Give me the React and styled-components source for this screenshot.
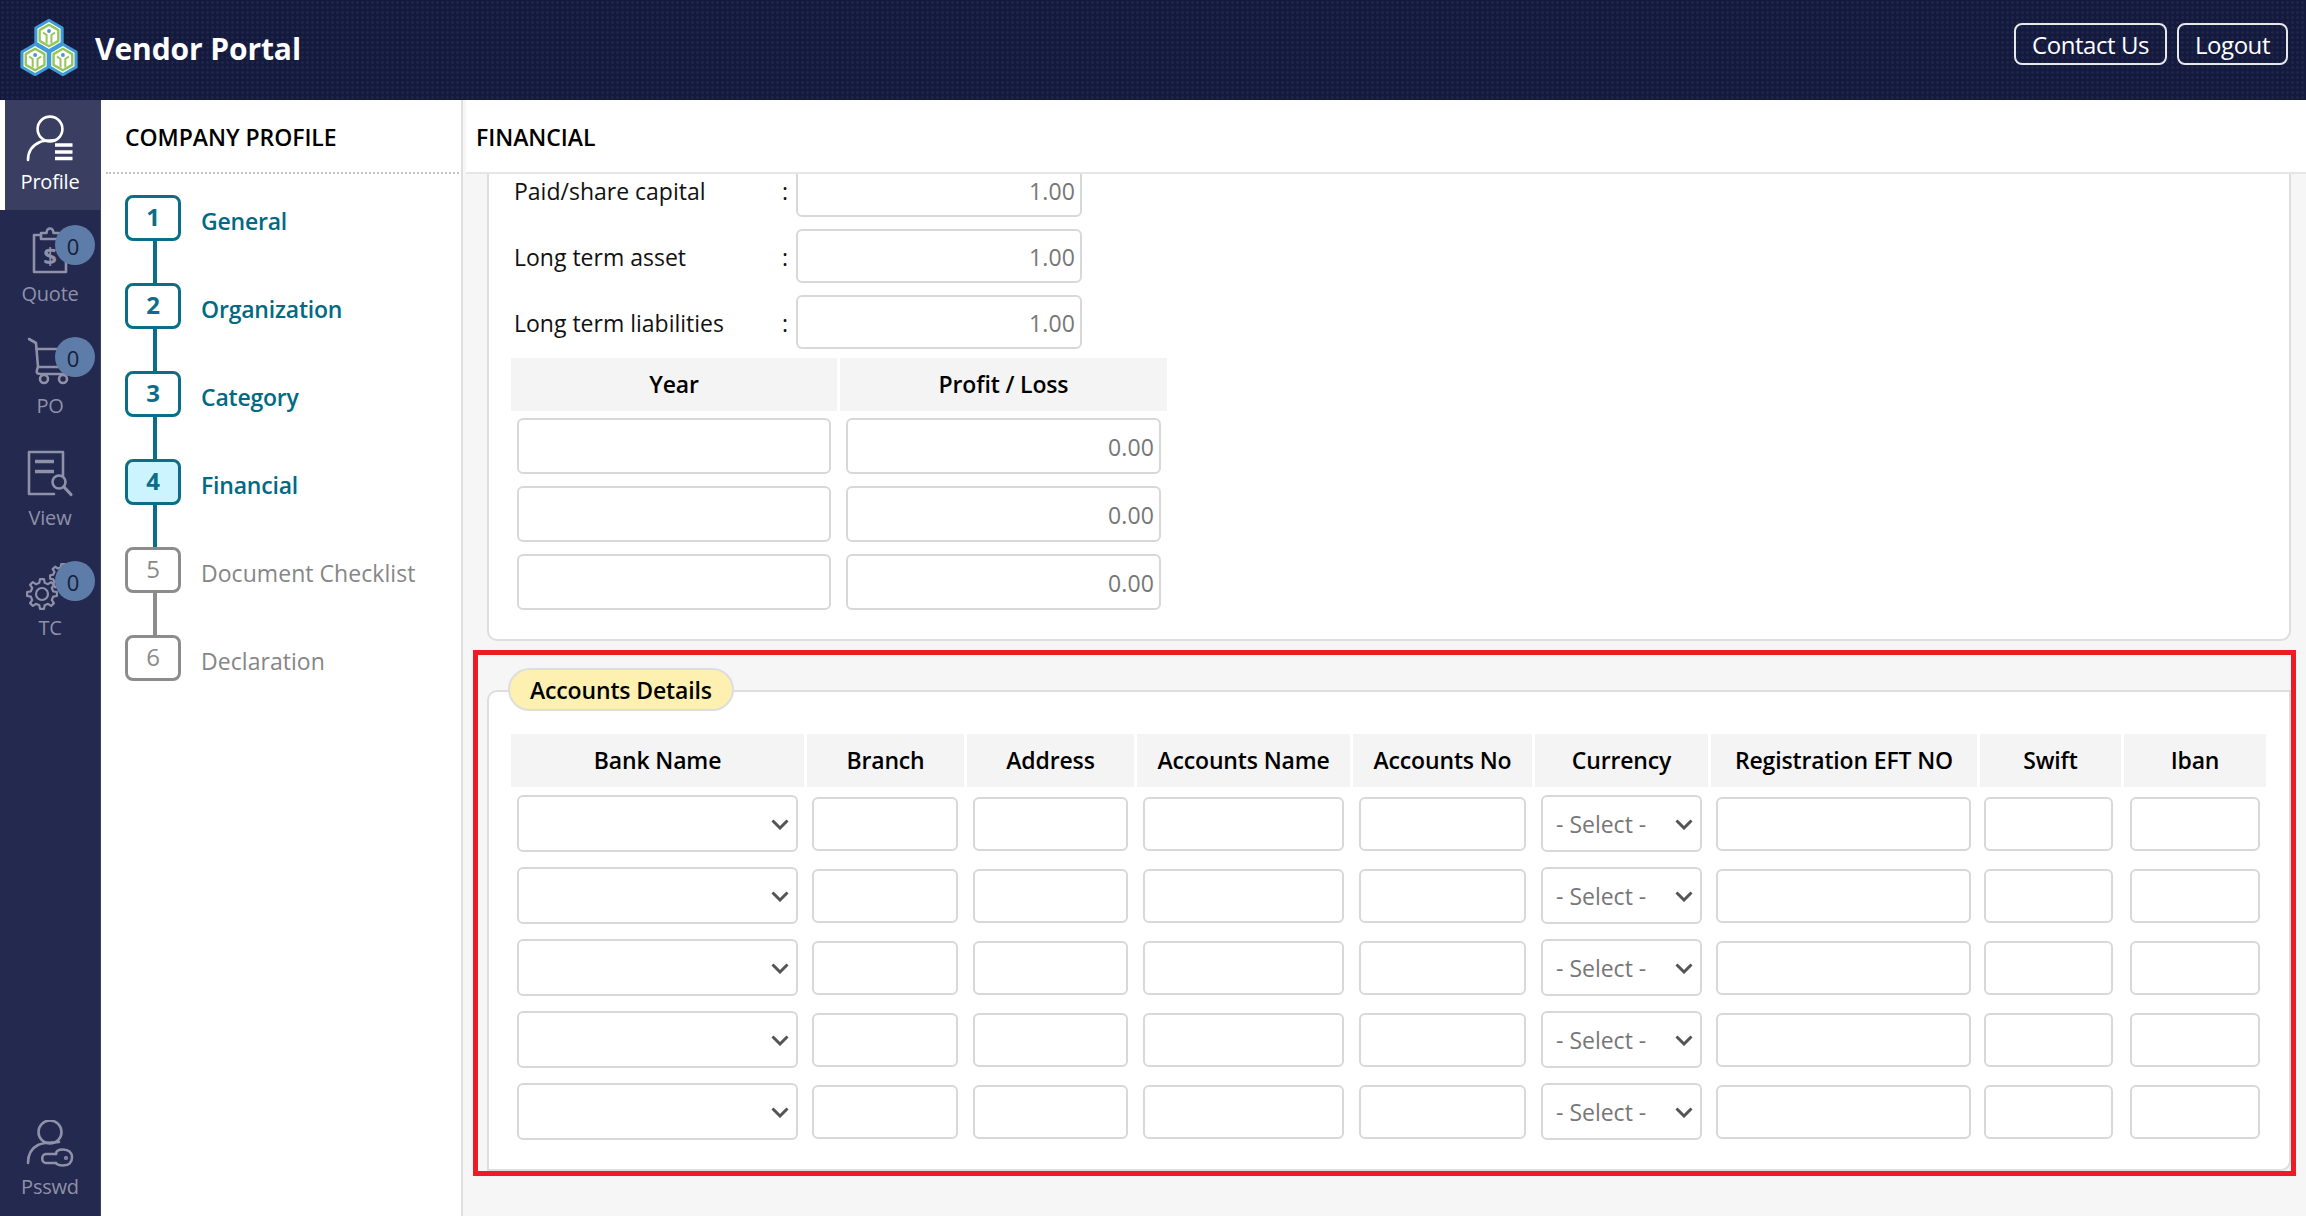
import styled, { createGlobalStyle } from "styled-components";

const GlobalStyle = createGlobalStyle`
  html, body {
    margin: 0;
    height: 100%;
    overflow: hidden;
    background: #fff;
    font-family: "Open Sans", "Noto Sans", sans-serif;
  }
  * { box-sizing: border-box; }
`;

const hexPoints = (cx, cy, r) =>
  [[0, -r], [0.866 * r, -r / 2], [0.866 * r, r / 2], [0, r], [-0.866 * r, r / 2], [-0.866 * r, -r / 2]]
    .map(([x, y]) => `${cx + x},${cy + y}`)
    .join(" ");

// outline of a cog with rounded-ish teeth, used for the TC icon
const gearPath = (cx, cy, outer, inner, teeth) => {
  const step = (Math.PI * 2) / teeth;
  const pts = [];
  for (let i = 0; i < teeth; i++) {
    const a = i * step;
    [[inner, -0.3], [outer, -0.17], [outer, 0.17], [inner, 0.3]].forEach(([r, k]) => {
      pts.push(`${(cx + r * Math.cos(a + k * step)).toFixed(2)} ${(cy + r * Math.sin(a + k * step)).toFixed(2)}`);
    });
  }
  return `M${pts.join("L")}Z`;
};

const LOGO_CELLS = [[28, 16.5], [14.1, 40.5], [41.9, 40.5]];

const Logo = () => (
  <svg width="58" height="58" viewBox="-1 -1 58 58">
    {LOGO_CELLS.map(([x, y]) => (
      <polygon key={`o${x}`} points={hexPoints(x, y, 15.5)} fill="#3f9bd8" stroke="#3f9bd8" strokeWidth="2.5" strokeLinejoin="round" />
    ))}
    {LOGO_CELLS.map(([x, y]) => (
      <polygon key={`w${x}`} points={hexPoints(x, y, 13.4)} fill="#fff" />
    ))}
    {LOGO_CELLS.map(([x, y]) => (
      <g key={`g${x}`} fill="none" stroke="#95c65c" strokeLinejoin="round">
        <polygon points={hexPoints(x, y, 10.8)} fill="#fff" strokeWidth="2.4" />
        <path d={`M${x - 6} ${y - 3}L${x - 2.4} ${y - 0.5}V${y + 8}M${x + 6} ${y - 3}L${x + 2.4} ${y - 0.5}V${y + 8}`} strokeWidth="2" />
        <circle cx={x} cy={y - 4.5} r="1.9" fill="#3f9bd8" stroke="none" />
      </g>
    ))}
  </svg>
);

const IconSvg = styled.svg`
  display: block;
  fill: none;
  stroke: currentColor;
  stroke-width: 2.6;
  stroke-linecap: round;
  stroke-linejoin: round;
`;

const ProfileIcon = () => (
  <IconSvg width="50" height="50" viewBox="0 0 50 50">
    <circle cx="25" cy="16" r="12.4" />
    <path d="M3 47C3 38 8 32 15 29C20 27 26 28 31 27" />
    <path d="M30 32H47.5M30 39H47.5M30 45.5H47.5" strokeWidth="3.6" strokeLinecap="butt" />
  </IconSvg>
);

const QuoteIcon = () => (
  <IconSvg width="50" height="50" viewBox="0 0 50 50">
    <path d="M16 10H9V47H41V10H34" strokeLinecap="butt" />
    <path d="M16 14V8H21.5C22 2 28 2 28.5 8H34V14Z" strokeLinecap="butt" />
    <text x="25" y="40" textAnchor="middle" fontSize="24" fontWeight="700" fill="currentColor" stroke="none" fontFamily="Open Sans">$</text>
  </IconSvg>
);

const CartIcon = () => (
  <IconSvg width="50" height="50" viewBox="0 0 50 50">
    <path d="M4 2L11 6L13 30H42" />
    <path d="M11.5 12H38" />
    <path d="M13 30C10 37 13 37 16 37H44" />
    <circle cx="19" cy="42" r="4" />
    <circle cx="38" cy="42" r="4" />
  </IconSvg>
);

const ViewIcon = () => (
  <IconSvg width="50" height="50" viewBox="0 0 50 50">
    <path d="M29 45H4V3H38V27" />
    <path d="M10 12.5H29M10 22.5H29" strokeWidth="3.4" strokeLinecap="butt" />
    <circle cx="34" cy="33" r="6.5" />
    <path d="M39 38L46 45.5" strokeWidth="3.2" />
  </IconSvg>
);

const GearsIcon = () => (
  <IconSvg width="50" height="50" viewBox="0 0 50 50">
    <path d={gearPath(38, 16, 13, 10, 8)} strokeWidth="2.2" />
    <path d={gearPath(17, 33, 15, 11.5, 8)} fill="#23294f" strokeWidth="2.2" />
    <circle cx="17" cy="33" r="6" strokeWidth="2.2" />
  </IconSvg>
);

const KeyUserIcon = () => (
  <IconSvg width="50" height="50" viewBox="0 0 50 50">
    <circle cx="25" cy="12" r="11.5" />
    <path d="M3 43C3 34 7 28 13 25C19 22 28 23 34 22" />
    <path d="M31 34H21C16 34 16 43 21 43H31" />
    <path d="M31 34C31 31 34 29.5 38 29.5C44 29.5 47 33 47 37.5C47 42 44 45.5 38 45.5C34 45.5 31 44 31 43" />
    <circle cx="41" cy="38" r="0.8" />
  </IconSvg>
);

const Chevron = () => (
  <ChevronMark width="18" height="11" viewBox="0 0 18 11">
    <path d="M1.5 1.5L9 9L16.5 1.5" />
  </ChevronMark>
);

const NAV_ITEMS = [
  { label: "Profile", Icon: ProfileIcon, active: true },
  { label: "Quote", Icon: QuoteIcon, badge: 0 },
  { label: "PO", Icon: CartIcon, badge: 0 },
  { label: "View", Icon: ViewIcon },
  { label: "TC", Icon: GearsIcon, badge: 0, tight: true },
];

const STEPS = [
  { n: 1, label: "General", state: "done" },
  { n: 2, label: "Organization", state: "done" },
  { n: 3, label: "Category", state: "done" },
  { n: 4, label: "Financial", state: "current" },
  { n: 5, label: "Document Checklist", state: "todo" },
  { n: 6, label: "Declaration", state: "todo" },
];

const FIELDS = [
  { label: "Paid/share capital", value: "1.00" },
  { label: "Long term asset", value: "1.00" },
  { label: "Long term liabilities", value: "1.00" },
];

const ACCOUNT_COLUMNS = [
  { title: "Bank Name", width: 293, kind: "bank" },
  { title: "Branch", width: 157, pad: "4px 6px 6px 5px" },
  { title: "Address", width: 167 },
  { title: "Accounts Name", width: 213 },
  { title: "Accounts No", width: 179 },
  { title: "Currency", width: 173, kind: "currency" },
  { title: "Registration EFT NO", width: 266, pad: "4px 6px 6px 5px" },
  { title: "Swift", width: 141, pad: "4px 8px 6px 4px" },
  { title: "Iban", width: 142 },
];

const Dropdown = ({ text }) => (
  <SelectWrap>
    <SelectInput>
      <option>{text}</option>
    </SelectInput>
    <Chevron />
  </SelectWrap>
);

const App = () => {
  return (
    <Page>
      <GlobalStyle />
      <Header>
        <Brand>
          <Logo />
          <BrandName>Vendor Portal</BrandName>
        </Brand>
        <HeaderActions>
          <HeaderButton>Contact Us</HeaderButton>
          <HeaderButton>Logout</HeaderButton>
        </HeaderActions>
      </Header>

      <Body>
        <Sidebar>
          {NAV_ITEMS.map(({ label, Icon, active, badge, tight }) => (
            <NavItem key={label} $active={active}>
              <Icon />
              <NavLabel $tight={tight}>{label}</NavLabel>
              {badge !== undefined && <Badge>{badge}</Badge>}
            </NavItem>
          ))}
          <NavItem $bottom>
            <KeyUserIcon />
            <NavLabel $tight>Psswd</NavLabel>
          </NavItem>
        </Sidebar>

        <StepPanel>
          <PanelTitle>COMPANY PROFILE</PanelTitle>
          <StepList>
            {STEPS.map((step, i) => (
              <Step key={step.n}>
                <StepBox $state={step.state}>{step.n}</StepBox>
                <StepLabel $state={step.state}>{step.label}</StepLabel>
                {i < STEPS.length - 1 && <StepLine $state={step.state} />}
              </Step>
            ))}
          </StepList>
        </StepPanel>

        <Main>
          <MainTitle>FINANCIAL</MainTitle>
          <ScrollArea>
            <FinancialCard>
              <FieldList>
                {FIELDS.map((f) => (
                  <FieldRow key={f.label}>
                    <FieldLabel>{f.label}</FieldLabel>
                    <Colon>:</Colon>
                    <TextInput readOnly value={f.value} $right />
                  </FieldRow>
                ))}
              </FieldList>
              <DataTable $width={659}>
                <colgroup>
                  <col width="326" />
                  <col width="327" />
                </colgroup>
                <thead>
                  <tr>
                    <HeadCell>Year</HeadCell>
                    <HeadCell>Profit / Loss</HeadCell>
                  </tr>
                </thead>
                <tbody>
                  {[0, 1, 2].map((r) => (
                    <tr key={r}>
                      <Cell $height={65} $pad="4px 6px 5px"><TextInput readOnly value="" $height={56} /></Cell>
                      <Cell $height={65} $pad="4px 6px 5px"><TextInput readOnly value="0.00" $right $height={56} /></Cell>
                    </tr>
                  ))}
                </tbody>
              </DataTable>
            </FinancialCard>

            <Highlight>
              <AccountsCard>
                <Legend>Accounts Details</Legend>
                <DataTable $width={1761}>
                  <colgroup>
                    {ACCOUNT_COLUMNS.map((c) => (
                      <col key={c.title} width={c.width} />
                    ))}
                  </colgroup>
                  <thead>
                    <tr>
                      {ACCOUNT_COLUMNS.map((c) => (
                        <HeadCell key={c.title}>{c.title}</HeadCell>
                      ))}
                    </tr>
                  </thead>
                  <tbody>
                    {[0, 1, 2, 3, 4].map((r) => (
                      <tr key={r}>
                        {ACCOUNT_COLUMNS.map((c) => (
                          <Cell key={c.title} $height={69} $pad={c.pad}>
                            {c.kind === "bank" && <Dropdown text="" />}
                            {c.kind === "currency" && <Dropdown text="- Select -" />}
                            {!c.kind && <TextInput readOnly value="" />}
                          </Cell>
                        ))}
                      </tr>
                    ))}
                  </tbody>
                </DataTable>
              </AccountsCard>
            </Highlight>
          </ScrollArea>
        </Main>
      </Body>
    </Page>
  );
};

const Page = styled.div`
  display: flex;
  flex-direction: column;
  height: 100vh;
  overflow: hidden;
`;

const Header = styled.header`
  display: flex;
  flex: none;
  align-items: flex-start;
  justify-content: space-between;
  height: 100px;
  padding: 23px 18px 0 20px;
  background-color: #131a3e;
  background-image: radial-gradient(circle, rgba(255, 255, 255, 0.05) 1px, transparent 1.6px);
  background-size: 5px 5px;
`;

const Brand = styled.div`
  display: flex;
  align-items: center;
  gap: 17px;
  margin-top: -5px;
`;

const BrandName = styled.div`
  margin-top: 2px;
  color: #fff;
  font-size: 30px;
  font-weight: 700;
  letter-spacing: -0.1px;
`;

const HeaderActions = styled.div`
  display: flex;
  gap: 10px;
`;

const HeaderButton = styled.button`
  height: 42px;
  padding: 0 16px;
  color: #fff;
  background: transparent;
  border: 2px solid #e8e8e8;
  border-radius: 8px;
  font-family: inherit;
  font-size: 24px;
  letter-spacing: -0.45px;
`;

const Sidebar = styled.nav`
  display: flex;
  flex: none;
  flex-direction: column;
  gap: 2px;
  width: 101px;
  background: #23294f;
  border-right: 1px solid #3d4265;
`;

const Body = styled.div`
  display: flex;
  flex: 1;
  min-height: 0;
`;

const NavItem = styled.div`
  position: relative;
  display: flex;
  flex: none;
  flex-direction: column;
  align-items: center;
  height: 110px;
  padding-top: 13px;
  color: ${(p) => (p.$active ? "#fff" : "#8f91a9")};
  background: ${(p) => (p.$active ? "#3a3f62" : "transparent")};
  ${(p) => p.$active && "box-shadow: inset 5px 0 0 #fff;"}
  ${(p) => p.$bottom && "margin-top: auto; height: 109px;"}
`;

const NavLabel = styled.span`
  margin-top: ${(p) => (p.$tight ? 4 : 6)}px;
  font-size: 20px;
  line-height: 26px;
  letter-spacing: -0.2px;
`;

const Badge = styled.span`
  position: absolute;
  top: 13px;
  left: 55px;
  display: flex;
  align-items: center;
  justify-content: center;
  width: 40px;
  height: 40px;
  padding: 2px 4px 0 0;
  color: #14203c;
  background: #5e7ca8;
  border-radius: 50%;
  font-size: 22px;
`;

const StepPanel = styled.aside`
  flex: none;
  width: 362px;
  background: #fff;
  border-right: 2px solid #dedede;
`;

const PanelTitle = styled.div`
  display: flex;
  align-items: center;
  height: 74px;
  margin: 0 2px 0 5px;
  padding: 2px 0 0 19px;
  border-bottom: 2px dotted #c4c4c4;
  color: #000;
  font-size: 23px;
  font-weight: 600;
  letter-spacing: -0.05px;
`;

const StepList = styled.div`
  display: flex;
  flex-direction: column;
  gap: 42px;
  padding: 21px 0 0 24px;
`;

const stepColor = (state) => (state === "todo" ? "#8c8c8c" : "#0c6d89");

const Step = styled.div`
  position: relative;
  display: flex;
  align-items: center;
  height: 46px;
`;

const StepBox = styled.div`
  display: flex;
  flex: none;
  align-items: center;
  justify-content: center;
  width: 56px;
  height: 46px;
  padding-bottom: 3px;
  color: ${(p) => (p.$state === "todo" ? "#8a8a8a" : "#0c6d89")};
  background: ${(p) => (p.$state === "current" ? "#ccf4ff" : "#fff")};
  border: 3px solid ${(p) => stepColor(p.$state)};
  border-radius: 8px;
  font-size: 24px;
  font-weight: ${(p) => (p.$state === "todo" ? 400 : 700)};
`;

const StepLabel = styled.span`
  margin: 6px 0 0 20px;
  color: ${(p) => (p.$state === "todo" ? "#868686" : "#006a85")};
  font-size: 23px;
  font-weight: ${(p) => (p.$state === "todo" ? 400 : 600)};
  letter-spacing: ${(p) => (p.$state === "todo" ? "0.05px" : "-0.2px")};
`;

const StepLine = styled.span`
  position: absolute;
  top: 46px;
  left: 28px;
  width: 4px;
  height: 42px;
  background: ${(p) => stepColor(p.$state)};
`;

const Main = styled.main`
  display: flex;
  flex: 1;
  flex-direction: column;
  min-width: 0;
  background: #f6f6f6;
`;

const MainTitle = styled.div`
  display: flex;
  flex: none;
  align-items: center;
  height: 74px;
  margin-left: 3px;
  padding: 2px 0 0 10px;
  background: #fff;
  border-bottom: 2px solid #e6e6e6;
  color: #000;
  font-size: 23px;
  font-weight: 600;
  letter-spacing: -0.05px;
`;

const ScrollArea = styled.div`
  flex: 1;
  min-height: 0;
  overflow: hidden;
  padding: 0 10px;
`;

const FinancialCard = styled.section`
  margin: 0 5px 9px 14px;
  padding: 0 19px 21px;
  background: #fff;
  border: 2px solid #dedede;
  border-top: none;
  border-radius: 0 0 10px 10px;
`;

const FieldList = styled.div`
  display: flex;
  flex-direction: column;
  gap: 12px;
  margin: -11px 0 6px 6px;
`;

const FieldRow = styled.div`
  display: grid;
  grid-template-columns: 270px 12px 286px;
  align-items: center;
  height: 54px;
`;

const FieldLabel = styled.span`
  padding-top: 2px;
  color: #111;
  font-size: 23px;
`;

const Colon = styled.span`
  padding: 1px 0 0;
  margin-left: -2px;
  color: #111;
  font-size: 23px;
`;

const TextInput = styled.input`
  display: block;
  width: 100%;
  height: ${(p) => p.$height || 54}px;
  padding: 1px 5px 0;
  color: #777;
  background: #fff;
  border: 2px solid #d8d8d8;
  border-radius: 6px;
  outline: none;
  font-family: inherit;
  font-size: 23px;
  letter-spacing: 0.1px;
  text-align: ${(p) => (p.$right ? "right" : "left")};
`;

const SelectWrap = styled.div`
  position: relative;
`;

const SelectInput = styled.select`
  display: block;
  width: 100%;
  height: 57px;
  padding: 0 13px;
  color: #777;
  background-color: #fff;
  border: 2px solid #d8d8d8;
  border-radius: 6px;
  outline: none;
  appearance: none;
  font-family: inherit;
  font-size: 23px;
`;

const ChevronMark = styled.svg`
  position: absolute;
  top: 24px;
  right: 9px;
  fill: none;
  stroke: #555;
  stroke-width: 3;
  pointer-events: none;
`;

const DataTable = styled.table`
  width: ${(p) => p.$width}px;
  border-spacing: 3px;
  table-layout: fixed;
`;

const HeadCell = styled.th`
  height: 53px;
  padding: 0 0 2px;
  color: #000;
  background: #f4f4f4;
  font-size: 23px;
  font-weight: 600;
  letter-spacing: -0.15px;
  text-align: center;
`;

const Cell = styled.td`
  height: ${(p) => p.$height}px;
  padding: ${(p) => p.$pad || "4px 6px 6px"};
  vertical-align: middle;
`;

const Highlight = styled.div`
  padding: 35px 0 0 9px;
  border: 5px solid #ed1c24;
`;

const AccountsCard = styled.section`
  position: relative;
  padding: 39px 0 19px 19px;
  background: #fff;
  border: 2px solid #dedede;
  border-radius: 10px 0 10px 0;
`;

const Legend = styled.div`
  position: absolute;
  top: -24px;
  left: 19px;
  display: flex;
  align-items: center;
  height: 43px;
  padding: 0 20px;
  color: #000;
  background: #fdf0b0;
  border: 2px solid #dedede;
  border-radius: 22px;
  font-size: 23px;
  font-weight: 600;
  letter-spacing: -0.15px;
`;

export default App;
